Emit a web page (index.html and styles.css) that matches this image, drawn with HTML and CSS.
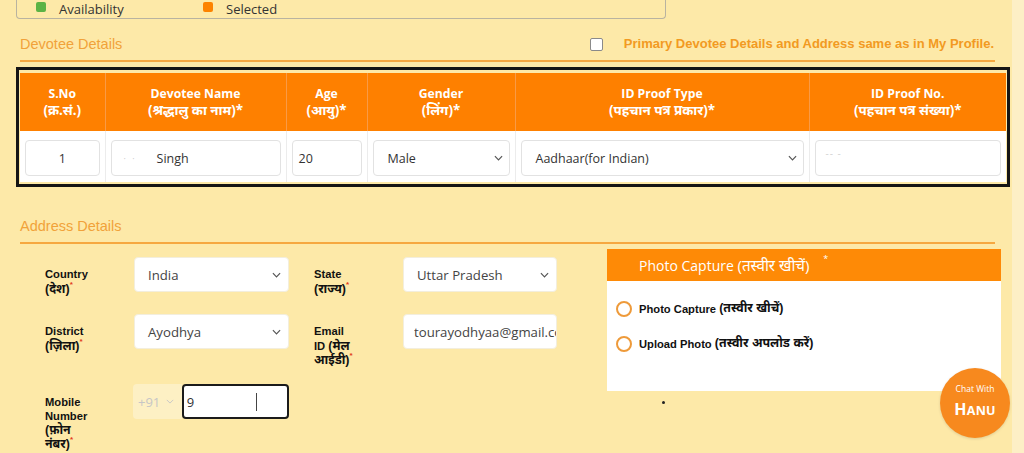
FILE: index.html
```html
<!DOCTYPE html>
<html lang="en">
<head>
<meta charset="utf-8">
<title>Devotee Details</title>
<link rel="stylesheet" href="styles.css">
</head>
<body>
<div class="page">
  <div class="legend">
    <span class="sw sw-green"></span><span class="lg-text">Availability</span>
    <span class="sw sw-orange"></span><span class="lg-text">Selected</span>
  </div>

  <div class="sec-head">
    <h2 class="sec-title">Devotee Details</h2>
    <label class="same"><span class="cb"></span>Primary Devotee Details and Address same as in My Profile.</label>
  </div>

  <div class="tbl-frame">
    <table class="dev-table">
      <colgroup>
        <col class="c1"><col class="c2"><col class="c3"><col class="c4"><col class="c5"><col class="c6">
      </colgroup>
      <thead>
        <tr>
          <th>S.No<br><span class="hi">(क्र.सं.)</span></th>
          <th>Devotee Name<br><span class="hi">(श्रद्धालु का नाम)*</span></th>
          <th>Age<br><span class="hi">(आयु)*</span></th>
          <th>Gender<br><span class="hi">(लिंग)*</span></th>
          <th>ID Proof Type<br><span class="hi">(पहचान पत्र प्रकार)*</span></th>
          <th>ID Proof No.<br><span class="hi">(पहचान पत्र संख्या)*</span></th>
        </tr>
      </thead>
      <tbody>
        <tr>
          <td><div class="inp center">1</div></td>
          <td><div class="inp name"><span class="blur">· ·</span>Singh</div></td>
          <td><div class="inp age">20</div></td>
          <td><div class="inp sel"><span>Male</span><svg class="chev" viewBox="0 0 10 6" width="9" height="6"><path d="M1 1l4 4 4-4" fill="none" stroke="#555" stroke-width="1.3"/></svg></div></td>
          <td><div class="inp sel"><span>Aadhaar(for Indian)</span><svg class="chev" viewBox="0 0 10 6" width="9" height="6"><path d="M1 1l4 4 4-4" fill="none" stroke="#555" stroke-width="1.3"/></svg></div></td>
          <td><div class="inp idno"><span class="blur2">-- -</span></div></td>
        </tr>
      </tbody>
    </table>
  </div>

  <div class="sec-head addr-head">
    <h2 class="sec-title">Address Details</h2>
  </div>

  <div class="addr-body">
    <div class="form-grid">
      <div class="lbl">Country <span class="hl">(देश)</span><sup class="req">*</sup></div>
      <div class="field sel"><span>India</span><svg class="chev" viewBox="0 0 10 6" width="9" height="6"><path d="M1 1l4 4 4-4" fill="none" stroke="#555" stroke-width="1.3"/></svg></div>
      <div class="lbl lbl2">State <span class="hl">(राज्य)</span><sup class="req">*</sup></div>
      <div class="field sel"><span>Uttar Pradesh</span><svg class="chev" viewBox="0 0 10 6" width="9" height="6"><path d="M1 1l4 4 4-4" fill="none" stroke="#555" stroke-width="1.3"/></svg></div>

      <div class="lbl">District <span class="hl">(ज़िला)</span><sup class="req">*</sup></div>
      <div class="field sel"><span>Ayodhya</span><svg class="chev" viewBox="0 0 10 6" width="9" height="6"><path d="M1 1l4 4 4-4" fill="none" stroke="#555" stroke-width="1.3"/></svg></div>
      <div class="lbl lbl2">Email<br>ID <span class="hl">(मेल</span><br><span class="hl">आईडी)</span><sup class="req">*</sup></div>
      <div class="field email"><span class="clip">tourayodhyaa@gmail.com</span></div>

      <div class="lbl lbl-mob">Mobile<br>Number<br><span class="hl">(फ़ोन</span><br><span class="hl">नंबर)</span><sup class="req">*</sup></div>
      <div class="mob">
        <div class="cc"><span>+91</span><svg viewBox="0 0 10 6" width="8" height="5"><path d="M1 1l4 4 4-4" fill="none" stroke="#c8c8c8" stroke-width="1.2"/></svg></div>
        <div class="mob-inp"><span>9</span><span class="caret"></span></div>
      </div>
    </div>

    <div class="photo">
      <div class="photo-head">Photo Capture <span class="hp">(तस्वीर खीचें)</span> <sup class="ph-req">*</sup></div>
      <div class="photo-body">
        <div class="radio-row"><span class="radio"></span>Photo Capture&nbsp;<span class="hl">(तस्वीर खीचें)</span></div>
        <div class="radio-row"><span class="radio"></span>Upload Photo&nbsp;<span class="hl">(तस्वीर अपलोड करें)</span></div>
      </div>
    </div>
  </div>

  <span class="dot"></span>
  <div class="chat">
    <span class="chat-top">Chat With</span>
    <span class="chat-name">H<small>ANU</small></span>
  </div>
</div>
</body>
</html>
```

FILE: styles.css
```css
* { box-sizing: border-box; }
html, body { margin: 0; padding: 0; }
body {
  background: #fdefc6;
  font-family: "Open Sans", "Noto Sans", "Noto Sans Devanagari", sans-serif;
  width: 1024px;
  height: 453px;
  overflow: hidden;
}
.page {
  position: relative;
  width: 1012px;
  height: 453px;
  background: #fde9a8;
}

/* legend */
.legend {
  margin-left: 16px;
  width: 650px;
  height: 19px;
  border: 1px solid #b9b3a0;
  border-top: none;
  border-radius: 0 0 4px 4px;
  display: flex;
  align-items: center;
  padding-left: 19px;
  padding-bottom: 1px;
  font-size: 13px;
  color: #333;
}
.sw { width: 10px; height: 10px; border-radius: 2px; display: inline-block; margin-top: -3px; }
.sw-green { background: #5cb345; }
.sw-orange { background: #fd8300; margin-left: 1px; }
.lg-text { margin-left: 13px; width: 143px; }

/* section heads */
.sec-head {
  margin-left: 20px;
  width: 975px;
  height: 43px;
  padding: 16px 0 7px;
  border-bottom: 2px solid #f6a840;
  display: flex;
  align-items: center;
  justify-content: space-between;
}
.sec-title {
  margin: 0;
  font-family: "Liberation Sans", Arial, sans-serif;
  font-weight: normal;
  font-size: 14.5px;
  line-height: 18px;
  color: #f1a23a;
}
.same {
  display: flex;
  align-items: center;
  font-family: "Liberation Sans", Arial, sans-serif;
  font-weight: bold;
  font-size: 13px;
  line-height: 18px;
  color: #f29a22;
  margin-right: 1px;
}
.cb {
  width: 13px; height: 13px;
  background: #fff;
  border: 1px solid #8a8a8a;
  border-radius: 2px;
  margin-right: 21px;
}
.addr-head { height: 57px; padding-top: 30px; }

/* table */
.tbl-frame {
  margin: 5px 0 0 16px;
  width: 994px;
  border: 3px solid #151515;
  padding: 3px 1px 2px 1px;
}
.dev-table {
  width: 986px;
  border-collapse: collapse;
  table-layout: fixed;
}
.c1 { width: 85px; } .c2 { width: 181px; } .c3 { width: 81px; }
.c4 { width: 148px; } .c5 { width: 294px; } .c6 { width: 197px; }
.dev-table th {
  background: #fe8000;
  color: #fff;
  height: 58px;
  font-size: 12.2px;
  font-weight: bold;
  line-height: 17px;
  padding: 0 2px 0;
  border-left: 1px solid #f99a45;
  text-align: center;
}
.hi { font-size: 13.4px; line-height: 17px; }
.dev-table th:first-child { border-left: none; }
.dev-table td {
  background: #fff;
  height: 51px;
  padding: 9px 5px 6px;
  border-left: 1px solid #ececec;
  vertical-align: top;
}
.dev-table td:first-child { border-left: none; }
.inp {
  height: 36px;
  border: 1px solid #e2e2e2;
  border-radius: 4px;
  background: #fff;
  font-size: 12.5px;
  color: #333;
  display: flex;
  align-items: center;
  padding: 0 8px;
}
.inp.center { justify-content: center; }
.inp.name { padding-left: 12px; }
.inp.age { padding-left: 6px; }
.blur { color: #c9c9c9; font-size: 9px; margin-right: 20px; letter-spacing: 2px; }
.inp.sel { justify-content: space-between; padding: 0 6px 0 14px; }
.inp.idno { align-items: flex-start; padding: 5px 10px; }
.blur2 { color: #d3d3d3; font-size: 10px; letter-spacing: 1px; }
.chev { flex: none; }

/* address */
.addr-body {
  display: flex;
  align-items: flex-start;
}
.form-grid {
  margin: 13px 0 0 45px;
  display: grid;
  grid-template-columns: 89px 155px 114px 154px;
  grid-template-rows: 57px 70px auto;
  align-items: start;
}
.lbl {
  font-family: "Liberation Sans", Arial, "Noto Sans Devanagari", sans-serif;
  font-weight: bold;
  font-size: 11.2px;
  line-height: 14.5px;
  color: #111;
  padding-top: 10px;
  max-width: 60px;
}
.hl { font-size: 12.4px; }
.lbl2 { padding-left: 25px; max-width: none; width: 90px; }
.lbl-mob { padding-top: 11px; line-height: 14px; }
.req { color: #e23a1a; font-size: 8px; line-height: 0; vertical-align: top; position: relative; top: 3px; }
.field {
  height: 35px;
  background: #fff;
  border: 1px solid #f3eedd;
  border-radius: 4px;
  font-size: 13.2px;
  color: #444;
  display: flex;
  align-items: center;
  padding: 0 7px 0 13px;
  overflow: hidden;
  white-space: nowrap;
}
.field.sel { justify-content: space-between; }
.field.email { padding: 0 0 0 10px; }
.clip { overflow: hidden; }
.mob { display: flex; height: 35px; margin-left: -1px; }
.cc {
  width: 49px;
  background: #fdf0c4;
  border-radius: 4px 0 0 4px;
  color: #c6c6c6;
  font-size: 13px;
  display: flex;
  align-items: center;
  gap: 6px;
  padding-left: 5px;
}
.mob-inp {
  position: relative;
  width: 108px;
  background: #fff;
  border: 2px solid #1b1b1b;
  border-radius: 4px;
  font-size: 13px;
  color: #333;
  display: flex;
  align-items: center;
  padding-left: 3px;
}
.caret {
  position: absolute;
  left: 72px;
  top: 7px;
  width: 1px;
  height: 18px;
  background: #444;
}

/* photo */
.photo {
  margin: 5px 0 0 50px;
  width: 394px;
}
.photo-head {
  height: 32px;
  background: #fe8a06;
  color: #fff;
  font-size: 14px;
  line-height: 32px;
  padding-left: 32px;
}
.hp { font-size: 15.2px; }
.ph-req { font-size: 9px; margin-left: 10px; line-height: 0; vertical-align: top; position: relative; top: 10px; }
.photo-body {
  height: 110px;
  background: #fff;
  padding: 20px 0 0 9px;
}
.radio-row {
  display: flex;
  align-items: center;
  height: 16px;
  margin-bottom: 19px;
  font-family: "Liberation Sans", Arial, "Noto Sans Devanagari", sans-serif;
  font-weight: bold;
  font-size: 11.2px;
  color: #111;
}
.radio {
  width: 16px; height: 16px;
  border: 2px solid #ee9a3a;
  border-radius: 50%;
  margin-right: 7px;
  background: #fff;
}

.dot {
  position: absolute;
  left: 662px; top: 401px;
  width: 3px; height: 3px;
  border-radius: 50%;
  background: #222;
}
.chat {
  position: absolute;
  left: 940px; top: 368px;
  width: 70px; height: 70px;
  border-radius: 50%;
  background: #f7891e;
  color: #fff;
  display: flex;
  flex-direction: column;
  align-items: center;
  justify-content: center;
  box-shadow: 0 1px 3px rgba(0,0,0,0.12);
}
.chat-top { font-size: 8.5px; line-height: 11px; margin-top: -2px; }
.chat-name { font-weight: bold; font-size: 16px; line-height: 20px; margin-top: 5px; letter-spacing: 0.3px; }
.chat-name small { font-size: 12.5px; }
```
